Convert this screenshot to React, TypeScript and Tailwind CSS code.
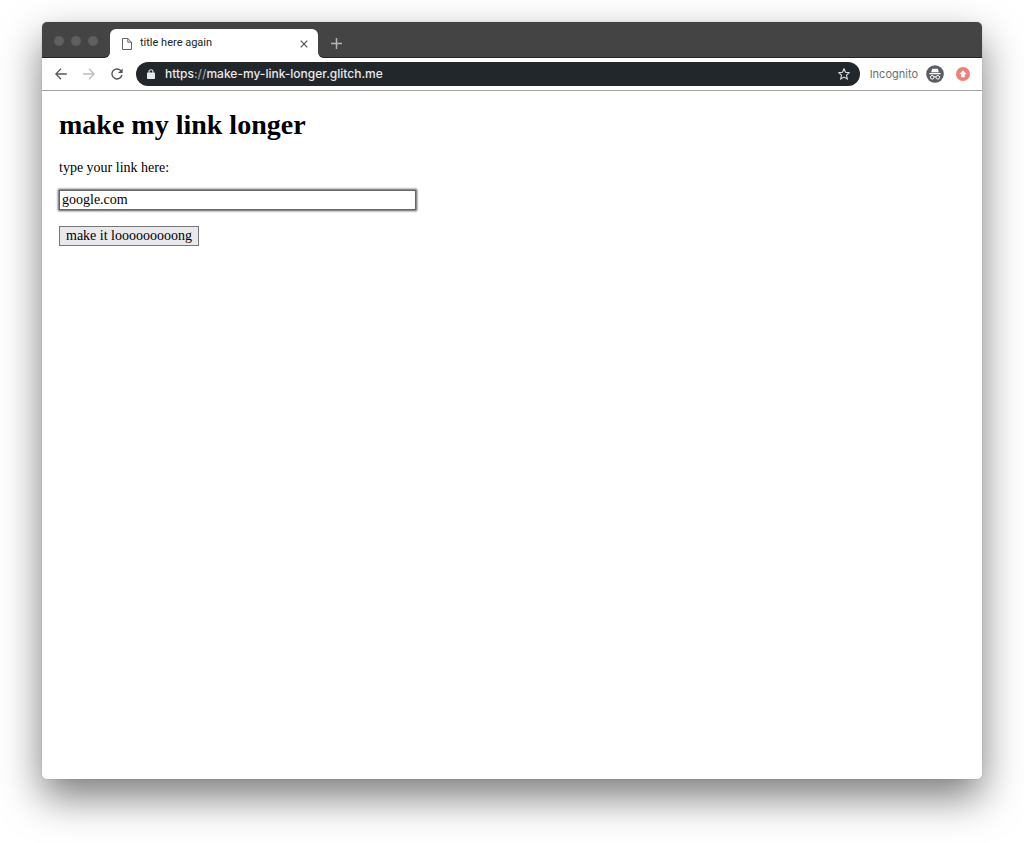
import { useState } from 'react'
import type { ReactNode } from 'react'

function IconButton({ label, children }: { label: string; children: ReactNode }) {
  return (
    <button type="button" aria-label={label} className="flex h-4 w-4 shrink-0 items-center justify-center">
      {children}
    </button>
  )
}

function TabStrip() {
  return (
    <div className="flex h-9 bg-white">
      {/* Window controls */}
      <div className="flex w-[68px] shrink-0 gap-[7px] rounded-br-md border-b border-[#252525] bg-[#444] pt-[14px] pl-3">
        <span className="h-[10px] w-[10px] rounded-full bg-[#5f5f5f]" />
        <span className="h-[10px] w-[10px] rounded-full bg-[#5f5f5f]" />
        <span className="h-[10px] w-[10px] rounded-full bg-[#5f5f5f]" />
      </div>

      {/* Active tab */}
      <div className="w-[208px] shrink-0 bg-[#444] pt-[7px]">
        <div className="flex h-full items-center rounded-t-md bg-white pr-[6px] pl-3">
          <svg className="h-3 w-[10px]" viewBox="0 0 10 12" fill="none" stroke="#5f6368" strokeWidth="1">
            <path d="M.5.5h5.3l3.7 3.7v7.3h-9zM5.8.5v3.7h3.7" />
          </svg>
          <span className="ml-2 flex-1 font-[Roboto,sans-serif] text-[11px] text-[#222]">title here again</span>
          <IconButton label="Close tab">
            <svg className="h-2 w-2" viewBox="0 0 8 8" stroke="#505357" strokeWidth="1.2">
              <path d="M.7.7l6.6 6.6M7.3.7L.7 7.3" />
            </svg>
          </IconButton>
        </div>
      </div>

      <div className="flex flex-1 items-center rounded-bl-md border-b border-[#252525] bg-[#444] pt-2 pl-[10px]">
        <IconButton label="New tab">
          <svg className="h-[11px] w-[11px]" viewBox="0 0 11 11" stroke="#b5b5b5" strokeWidth="1.5">
            <path d="M5.5 0v11M0 5.5h11" />
          </svg>
        </IconButton>
      </div>
    </div>
  )
}

function Toolbar() {
  return (
    <div className="flex h-[33px] items-center border-b border-[#a3a3a3] bg-white pr-3 pl-[11px]">
      <div className="flex gap-3">
        <IconButton label="Back">
          <svg className="h-3 w-3" viewBox="0 0 12 12" fill="none" stroke="#55585c" strokeWidth="1.3">
            <path d="M11.8 6H1M6 .7L.8 6 6 11.3" />
          </svg>
        </IconButton>
        <IconButton label="Forward">
          <svg className="h-3 w-3" viewBox="0 0 12 12" fill="none" stroke="#b9bbbd" strokeWidth="1.3">
            <path d="M.2 6H11M6 .7L11.2 6 6 11.3" />
          </svg>
        </IconButton>
        <IconButton label="Reload">
          <svg className="h-3 w-3" viewBox="0 0 12 12" fill="none" stroke="#55585c" strokeWidth="1.4">
            <path d="M10.2 3.2A5 5 0 1 0 10.9 7" />
            <path d="M11.7.4v4.7H7z" fill="#55585c" stroke="none" />
          </svg>
        </IconButton>
      </div>

      <div className="ml-[11px] flex h-6 flex-1 items-center rounded-full bg-[#22272b] pr-2 pl-[11px]">
        <svg className="h-[10px] w-2" viewBox="0 0 8 10">
          <path d="M2 4V2.7a2 2 0 0 1 4 0V4" fill="none" stroke="#e8eaed" strokeWidth="1.1" />
          <rect y="3.6" width="8" height="6.4" rx="0.8" fill="#e8eaed" />
        </svg>
        <span className="ml-[10px] flex-1 text-[12px] font-medium text-[#e8eaed]">
          https<span className="text-[#9aa0a6]">://</span>make-my-link-longer.glitch.me
        </span>
        <IconButton label="Bookmark this page">
          <svg className="h-3 w-3" viewBox="0 0 12 12" fill="none" stroke="#dadce0" strokeWidth="1.1">
            <path d="M6 .8l1.5 3.5 3.8.4-2.8 2.5.8 3.8L6 9.1 2.7 11l.8-3.8L.7 4.7l3.8-.4z" />
          </svg>
        </IconButton>
      </div>

      <span className="ml-[10px] text-[11px] text-[#6b6e72]">Incognito</span>
      <svg className="ml-2 h-[18px] w-[18px]" viewBox="0 0 18 18">
        <circle cx="9" cy="9" r="8.8" fill="#5a5d61" />
        <path d="M6.2 3.8h5.6l1 3.4H5.2z" fill="#fff" />
        <path d="M3.4 8.7h11.2" stroke="#fff" strokeWidth="1.2" />
        <g fill="none" stroke="#fff" strokeWidth="1">
          <circle cx="6.2" cy="12.3" r="1.8" />
          <circle cx="11.8" cy="12.3" r="1.8" />
          <path d="M8 12q1-.7 2 0" />
        </g>
      </svg>
      <button type="button" aria-label="Update available" className="ml-3">
        <svg className="h-[14px] w-[14px]" viewBox="0 0 14 14">
          <circle cx="7" cy="7" r="7" fill="#ee8078" />
          <path d="M7 3.2l3.7 4H8.8v3.1H5.2V7.2H3.3z" fill="#fff" />
        </svg>
      </button>
    </div>
  )
}

function LinkPage() {
  const [link, setLink] = useState('google.com')

  return (
    <main className="flex-1 bg-white px-[17px] pt-[18px] font-['Liberation_Serif',serif] text-[14px] leading-4 text-black">
      <h1 className="text-[28px] leading-8 font-bold">make my link longer</h1>
      <form onSubmit={(e) => e.preventDefault()}>
        <label htmlFor="link" className="mt-[19px] block">
          type your link here:
        </label>
        <input
          id="link"
          type="text"
          value={link}
          onChange={(e) => setLink(e.target.value)}
          className="mt-[14px] block h-5 w-[357px] max-w-full border border-[#666] bg-white px-[2px] shadow-[0_0_2px_1px_#555] outline-none"
        />
        <button type="submit" className="mt-4 block h-5 border border-[#777] bg-[#e9e9ed] px-[6px]">
          make it looooooooong
        </button>
      </form>
    </main>
  )
}

export default function App() {
  return (
    <div className="flex min-h-screen flex-col bg-white px-[42px] pt-[22px] pb-16 font-[Inter,sans-serif]">
      <div className="flex flex-1 flex-col overflow-hidden rounded-[5px] shadow-[0_18px_40px_rgba(0,0,0,0.52),0_0_1px_rgba(0,0,0,0.4)]">
        <TabStrip />
        <Toolbar />
        <LinkPage />
      </div>
    </div>
  )
}
